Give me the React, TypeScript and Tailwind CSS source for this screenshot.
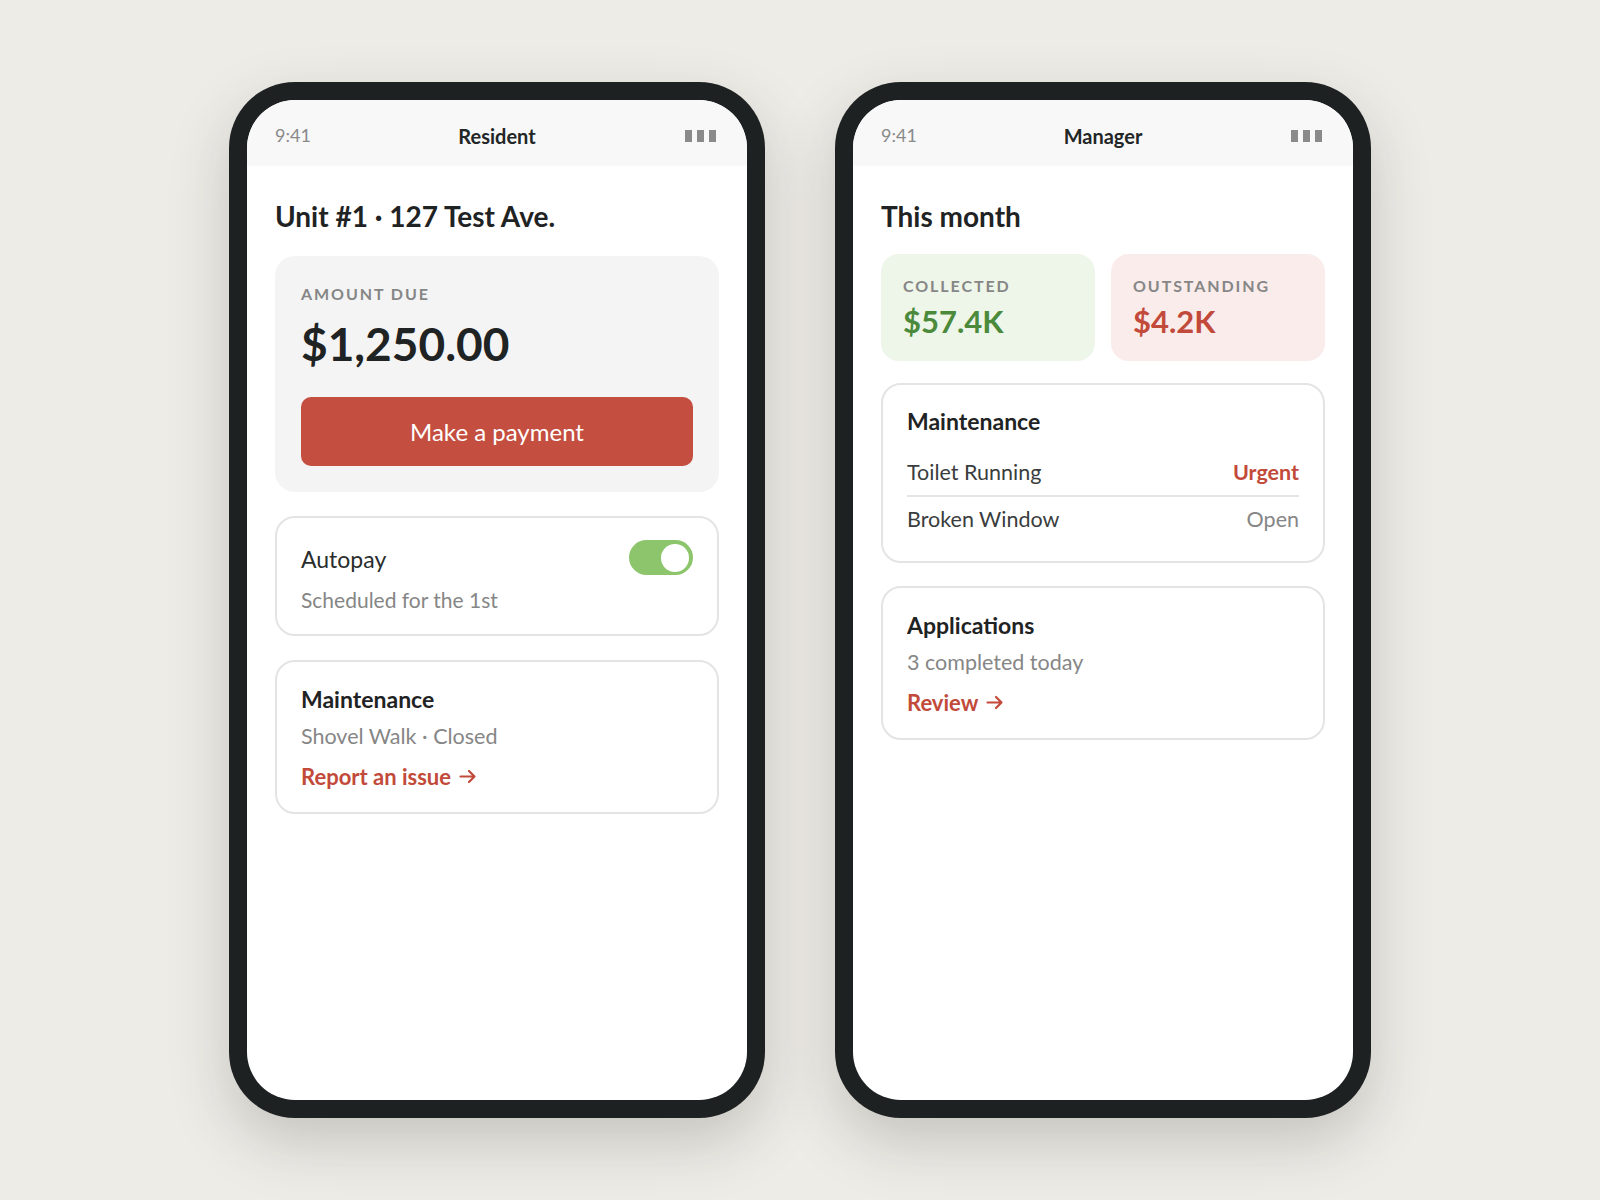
import type { ReactNode } from "react"

const font = { fontFamily: "Lato, 'Noto Sans', sans-serif" }

function Arrow() {
  return (
    <svg width="18" height="15" viewBox="0 0 18 15" fill="none" className="inline-block ml-[8px] -mt-[2px]">
      <path d="M1.5 7.5h14M10 2l5.5 5.5L10 13" stroke="currentColor" strokeWidth="2.2" strokeLinecap="round" strokeLinejoin="round" />
    </svg>
  )
}

function Phone({ title, children }: { title: string; children: ReactNode }) {
  return (
    <div className="w-[536px] h-[1036px] rounded-[66px] bg-[#1e2122] p-[18px] shadow-[0_24px_60px_rgba(60,55,45,0.22)]">
      <div className="h-full rounded-[48px] bg-white overflow-hidden flex flex-col">
        <div className="h-[66px] shrink-0 bg-[#f8f8f8] px-7 pt-[5px] grid grid-cols-3 items-center">
          <span className="text-[18px] text-[#8a8a8a]">9:41</span>
          <span className="text-center text-[20px] font-bold text-[#232626]">{title}</span>
          <div className="flex justify-end gap-[5px] pr-[3px]">
            <span className="w-[7px] h-[12px] bg-[#8a8a8a]" />
            <span className="w-[7px] h-[12px] bg-[#8a8a8a]" />
            <span className="w-[7px] h-[12px] bg-[#8a8a8a]" />
          </div>
        </div>
        <div className="px-7 pt-8 flex flex-col">{children}</div>
      </div>
    </div>
  )
}

function LinkCard({ title, sub, link, className }: { title: string; sub: string; link: string; className?: string }) {
  return (
    <div className={"rounded-[20px] border-2 border-[#e4e4e4] px-6 pt-[22px] pb-[21px] " + (className ?? "")}>
      <div className="text-[23px] leading-[30px] font-bold text-[#1f2323]">{title}</div>
      <div className="mt-2 text-[21.5px] leading-[28px] text-[#868686]">{sub}</div>
      <div className="mt-[13px] text-[22px] leading-[28px] font-bold text-[#c24a3b] flex items-center">
        {link}
        <Arrow />
      </div>
    </div>
  )
}

function Resident() {
  return (
    <Phone title="Resident">
      <h1 className="text-[28px] leading-9 font-bold text-[#1f2323] mb-[22px]">Unit #1 · 127 Test Ave.</h1>

      <div className="rounded-[20px] bg-[#f4f4f4] px-[26px] pt-[28px] pb-[26px]">
        <div className="text-[16px] leading-5 font-bold tracking-[0.12em] text-[#868686]">AMOUNT DUE</div>
        <div className="mt-3 text-[46px] leading-[56px] font-bold text-[#1f2323]">$1,250.00</div>
        <button className="mt-[25px] w-full h-[69px] rounded-[10px] bg-[#c44e3f] text-white text-[24px]">
          Make a payment
        </button>
      </div>

      <div className="mt-6 rounded-[20px] border-2 border-[#e4e4e4] px-6 pt-[26px] pb-[20px] flex justify-between items-start">
        <div>
          <div className="text-[23px] leading-[30px] text-[#2a2d2d]">Autopay</div>
          <div className="mt-3 text-[21px] leading-[28px] text-[#868686]">Scheduled for the 1st</div>
        </div>
        <div className="-mt-1 w-[64px] h-[35px] rounded-full bg-[#8cc56b] flex items-center justify-end pr-[4px]">
          <span className="w-[28px] h-[28px] rounded-full bg-white" />
        </div>
      </div>

      <LinkCard className="mt-6" title="Maintenance" sub="Shovel Walk · Closed" link="Report an issue" />
    </Phone>
  )
}

function Manager() {
  return (
    <Phone title="Manager">
      <h1 className="text-[28px] leading-9 font-bold text-[#1f2323] mb-5">This month</h1>

      <div className="grid grid-cols-2 gap-4">
        <div className="rounded-[18px] bg-[#eef5e9] px-[22px] pt-[22px] pb-5">
          <div className="text-[16px] leading-5 font-bold tracking-[0.12em] text-[#868686]">COLLECTED</div>
          <div className="mt-[5px] text-[31px] leading-10 font-bold text-[#4b8a3b]">$57.4K</div>
        </div>
        <div className="rounded-[18px] bg-[#f9ecea] px-[22px] pt-[22px] pb-5">
          <div className="text-[16px] leading-5 font-bold tracking-[0.12em] text-[#868686]">OUTSTANDING</div>
          <div className="mt-[5px] text-[31px] leading-10 font-bold text-[#c24a3b]">$4.2K</div>
        </div>
      </div>

      <div className="mt-[22px] rounded-[20px] border-2 border-[#e4e4e4] px-6 pt-[21px] pb-[28px]">
        <div className="text-[23px] leading-[30px] font-bold text-[#1f2323]">Maintenance</div>
        <div className="mt-[22px] flex justify-between pb-[9px] border-b-2 border-[#e4e4e4] text-[21.5px] leading-[28px]">
          <span className="text-[#3a3d3d]">Toilet Running</span>
          <span className="font-bold text-[#c24a3b]">Urgent</span>
        </div>
        <div className="pt-2 flex justify-between text-[21.5px] leading-[28px]">
          <span className="text-[#3a3d3d]">Broken Window</span>
          <span className="text-[#868686]">Open</span>
        </div>
      </div>

      <LinkCard className="mt-[23px]" title="Applications" sub="3 completed today" link="Review" />
    </Phone>
  )
}

export default function App() {
  return (
    <div style={font} className="min-h-screen w-full bg-[#edece7] flex items-center justify-center gap-[70px]">
      <Resident />
      <Manager />
    </div>
  )
}
